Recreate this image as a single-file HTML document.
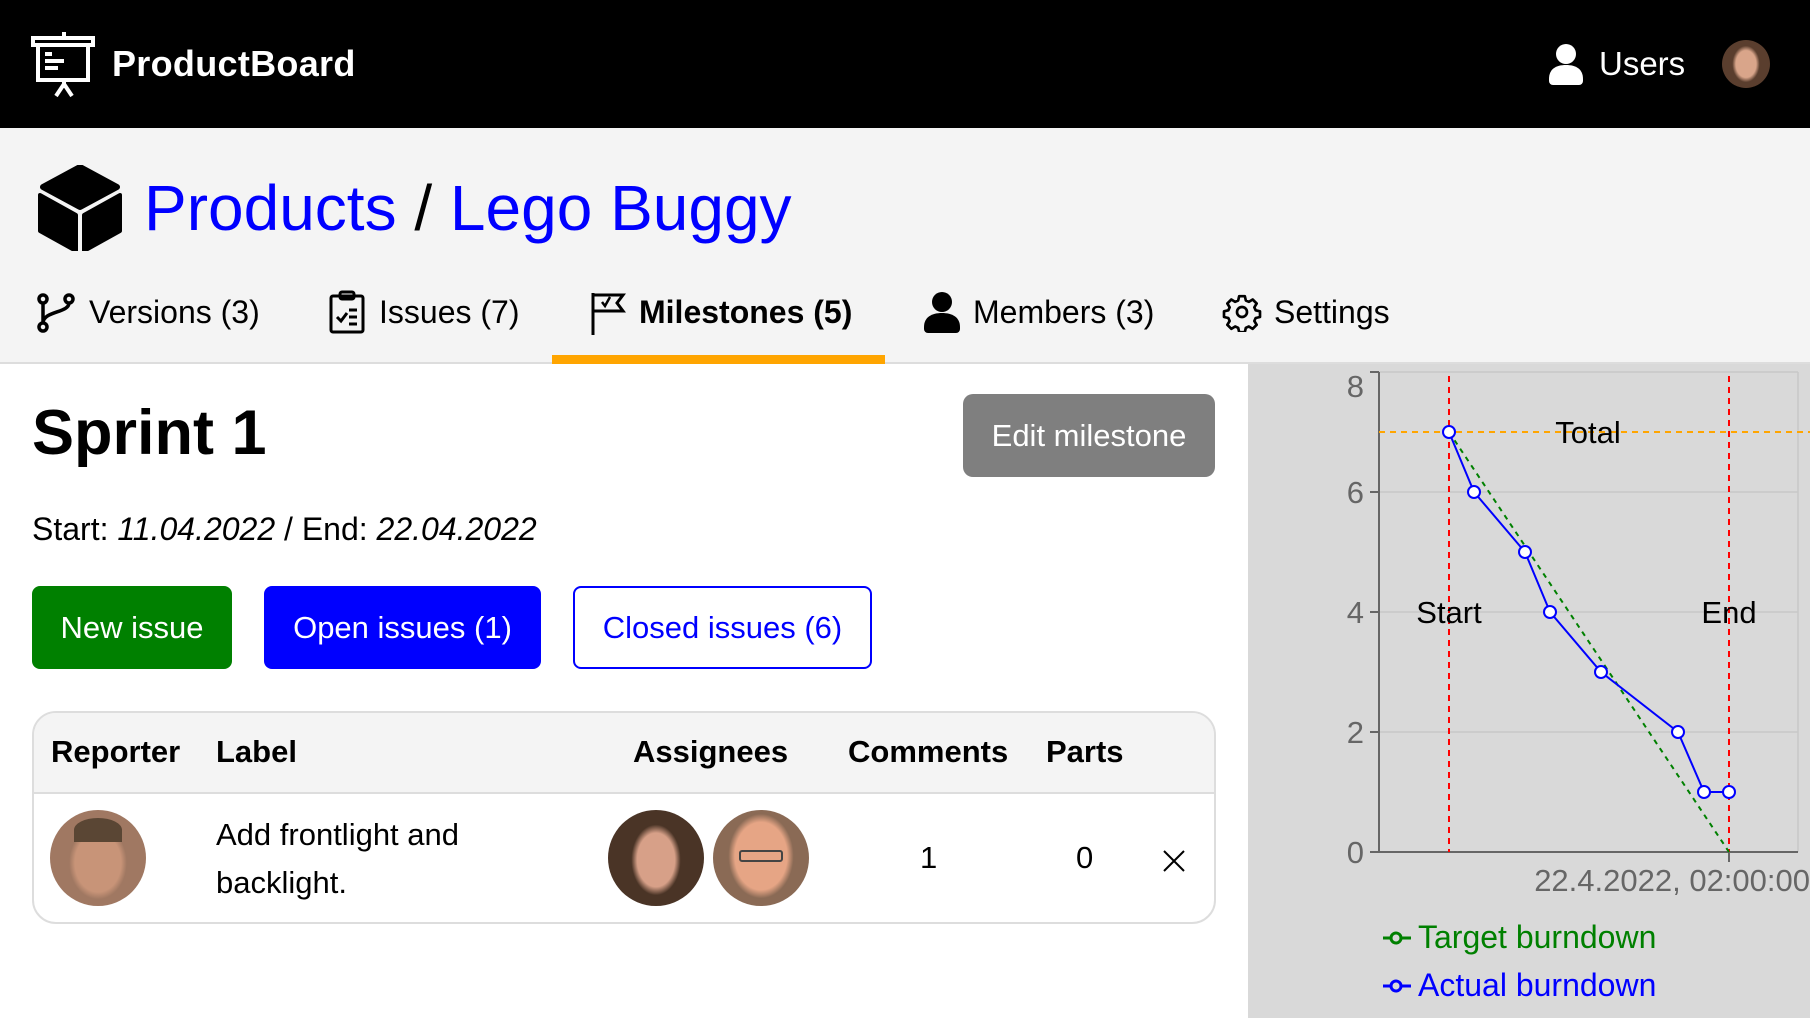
<!DOCTYPE html>
<html><head><meta charset="utf-8"><style>
*{box-sizing:border-box;margin:0;padding:0}
body{width:1810px;height:1018px;overflow:hidden;font-family:"Liberation Sans",Arial,sans-serif;background:#fff;position:relative;color:#000}
.a{position:absolute;white-space:nowrap}
.hdr{position:absolute;left:0;top:0;width:1810px;height:128px;background:#000}
.sub{position:absolute;left:0;top:128px;width:1810px;height:236px;background:#f4f4f4;border-bottom:2px solid #ddd}
.tab{position:absolute;top:292px;font-size:32px;line-height:40px}
.btn{position:absolute;top:586px;height:83px;border-radius:8px;font-size:31px;line-height:83px;text-align:center}
.th{position:absolute;top:732px;font-size:31px;font-weight:bold;line-height:40px}
.av{position:absolute;border-radius:50%;overflow:hidden}
</style></head><body>
<div class="hdr"></div>
<svg class="a" style="left:30px;top:30px" width="68" height="68" viewBox="0 0 68 68" fill="none" stroke="#fff" stroke-width="4">
<line x1="34" y1="2" x2="34" y2="8"/><rect x="3" y="8" width="60" height="7"/><rect x="8" y="15" width="50" height="35"/>
<line x1="15" y1="24" x2="22" y2="24"/><line x1="15" y1="31" x2="34" y2="31"/><line x1="15" y1="38" x2="28" y2="38"/>
<line x1="34" y1="50" x2="34" y2="58"/><line x1="34" y1="54" x2="26" y2="66"/><line x1="34" y1="54" x2="42" y2="66"/></svg>
<div class="a" style="left:112px;top:44px;color:#fff;font-weight:bold;font-size:36px;line-height:40px;letter-spacing:0.3px">ProductBoard</div>
<svg class="a" style="left:1547px;top:43px" width="38" height="42" viewBox="0 0 38 42" fill="#fff"><circle cx="19" cy="11" r="10"/><path d="M2 36c0-10 7-14 17-14s17 4 17 14v2a4 4 0 0 1-4 4H6a4 4 0 0 1-4-4z"/></svg>
<div class="a" style="left:1599px;top:44px;color:#fff;font-size:33px;line-height:40px">Users</div>
<div class="av" style="left:1722px;top:40px;width:48px;height:48px;background:radial-gradient(ellipse 30% 40% at 50% 50%,#d9a58a 0 70%,#5a3e2e 95%),#a8b0b0"></div>
<div class="sub"></div>
<svg class="a" style="left:37px;top:165px" width="86" height="86" viewBox="0 0 86 86" fill="#000">
<path d="M43 2 L80 22 L43 42 L6 22Z" stroke="#000" stroke-width="6" stroke-linejoin="round"/>
<path d="M3 30 L39 50 L39 86 L3 66Z" stroke="#000" stroke-width="4" stroke-linejoin="round"/><path d="M83 30 L47 50 L47 86 L83 66Z" stroke="#000" stroke-width="4" stroke-linejoin="round"/></svg>
<div class="a" style="left:144px;top:171px;font-size:64px;line-height:75px"><span style="color:#0000ff">Products</span> / <span style="color:#0000ff">Lego Buggy</span></div>
<svg class="a" style="left:37px;top:293px" width="40" height="40" viewBox="0 0 40 40" fill="none" stroke="#000" stroke-width="3.5"><circle cx="6" cy="6" r="4"/><circle cx="6" cy="34" r="4"/><circle cx="32" cy="6" r="4"/><path d="M6 10v20M32 10c0 10-26 8-26 20"/></svg>
<div class="tab" style="left:89px">Versions (3)</div>
<svg class="a" style="left:329px;top:290px" width="36" height="44" viewBox="0 0 36 44" fill="none" stroke="#000" stroke-width="3"><rect x="2" y="6" width="32" height="36" rx="2"/><rect x="11" y="2" width="14" height="7" rx="2"/><path d="M8 27l4 4 6-8M20 20h8M20 27h8M20 34h8"/></svg>
<div class="tab" style="left:379px">Issues (7)</div>
<svg class="a" style="left:590px;top:291px" width="36" height="44" viewBox="0 0 36 44" fill="none" stroke="#000" stroke-width="3"><path d="M3 2v42M3 4h30l-6 8 6 8H3"/><path d="M12 11l3 4 5-9" stroke-width="2.5"/></svg>
<div class="tab" style="left:639px;font-weight:bold">Milestones (5)</div>
<div class="a" style="left:552px;top:355px;width:333px;height:9px;background:#ffa500"></div>
<svg class="a" style="left:922px;top:291px" width="40" height="42" viewBox="0 0 40 42" fill="#000"><circle cx="20" cy="11" r="10"/><path d="M2 36c0-10 8-14 18-14s18 4 18 14v2a4 4 0 0 1-4 4H6a4 4 0 0 1-4-4z"/></svg>
<div class="tab" style="left:973px">Members (3)</div>
<svg class="a" style="left:1222px;top:292px" width="40" height="40" viewBox="0 0 24 24" fill="none" stroke="#000" stroke-width="1.6"><circle cx="12" cy="12" r="3"/><path d="M10.3 2.5h3.4l.6 2.6 1.8.8 2.3-1.4 2.4 2.4-1.4 2.3.8 1.8 2.6.6v3.4l-2.6.6-.8 1.8 1.4 2.3-2.4 2.4-2.3-1.4-1.8.8-.6 2.6h-3.4l-.6-2.6-1.8-.8-2.3 1.4-2.4-2.4 1.4-2.3-.8-1.8-2.6-.6v-3.4l2.6-.6.8-1.8-1.4-2.3 2.4-2.4 2.3 1.4 1.8-.8z" stroke-linejoin="round"/></svg>
<div class="tab" style="left:1274px">Settings</div>

<div class="a" style="left:32px;top:398px;font-size:63px;font-weight:bold;line-height:70px">Sprint 1</div>
<div class="a" style="left:963px;top:394px;width:252px;height:83px;background:#7f7f7f;border-radius:10px;color:#fff;font-size:31px;line-height:83px;text-align:center">Edit milestone</div>
<div class="a" style="left:32px;top:511px;font-size:32px;line-height:36px">Start: <i>11.04.2022</i> / End: <i>22.04.2022</i></div>
<div class="btn" style="left:32px;width:200px;background:#008000;color:#fff">New issue</div>
<div class="btn" style="left:264px;width:277px;background:#0000ff;color:#fff">Open issues (1)</div>
<div class="btn" style="left:573px;width:299px;background:#fff;color:#0000ff;border:2px solid #0000ff;line-height:79px">Closed issues (6)</div>

<div class="a" style="left:32px;top:711px;width:1184px;height:213px;border:2px solid #ddd;border-radius:24px;overflow:hidden;background:#fff">
<div style="height:81px;background:#f4f4f4;border-bottom:2px solid #ddd"></div></div>
<div class="th" style="left:51px">Reporter</div>
<div class="th" style="left:216px">Label</div>
<div class="th" style="left:633px">Assignees</div>
<div class="th" style="left:848px">Comments</div>
<div class="th" style="left:1046px">Parts</div>
<div class="av" style="left:50px;top:810px;width:96px;height:96px;background:radial-gradient(ellipse 30% 38% at 50% 55%,#c89478 0 80%,#a07862 100%),#e8e8e8"><div style="position:absolute;left:24px;top:8px;width:48px;height:24px;border-radius:50% 50% 0 0;background:#5a4634"></div></div>
<div class="a" style="left:216px;top:811px;font-size:31px;line-height:48px">Add frontlight and<br>backlight.</div>
<div class="av" style="left:608px;top:810px;width:96px;height:96px;background:radial-gradient(ellipse 28% 40% at 50% 52%,#d7a088 0 70%,#4a3426 92%),#b8bfbf"></div>
<div class="av" style="left:713px;top:810px;width:96px;height:96px;background:radial-gradient(ellipse 34% 44% at 50% 48%,#e6a585 0 80%,#8a6a55 100%),#9a9284"><div style="position:absolute;left:26px;top:40px;width:44px;height:12px;border:2px solid #444;border-radius:3px"></div></div>
<div class="a" style="left:920px;top:838px;font-size:31px;line-height:40px">1</div>
<div class="a" style="left:1076px;top:838px;font-size:31px;line-height:40px">0</div>
<svg class="a" style="left:1162px;top:849px" width="24" height="24" viewBox="0 0 24 24" stroke="#000" stroke-width="2"><path d="M2 2L22 22M22 2L2 22"/></svg>

<svg class="a" style="left:1248px;top:364px" width="562" height="654" viewBox="1248 364 562 654">
<rect x="1248" y="364" width="562" height="654" fill="#d9d9d9"/>
<g stroke="#c8c8c8" stroke-width="1.5"><line x1="1379" y1="372" x2="1798" y2="372"/><line x1="1379" y1="492" x2="1798" y2="492"/><line x1="1379" y1="612" x2="1798" y2="612"/><line x1="1379" y1="732" x2="1798" y2="732"/><line x1="1798" y1="372" x2="1798" y2="852"/></g>
<g stroke="#666" stroke-width="2"><line x1="1379" y1="372" x2="1379" y2="852"/><line x1="1379" y1="852" x2="1798" y2="852"/><line x1="1370" y1="372" x2="1379" y2="372"/><line x1="1370" y1="492" x2="1379" y2="492"/><line x1="1370" y1="612" x2="1379" y2="612"/><line x1="1370" y1="732" x2="1379" y2="732"/><line x1="1370" y1="852" x2="1379" y2="852"/><line x1="1729" y1="852" x2="1729" y2="862"/></g>
<g fill="#666" font-size="31" text-anchor="end" font-family="Liberation Sans"><text x="1364" y="397">8</text><text x="1364" y="503">6</text><text x="1364" y="623">4</text><text x="1364" y="743">2</text><text x="1364" y="863">0</text><text x="1810" y="891">22.4.2022, 02:00:00</text></g>
<line x1="1379" y1="432" x2="1810" y2="432" stroke="#ffa500" stroke-width="2" stroke-dasharray="6 5"/>
<line x1="1449" y1="376" x2="1449" y2="852" stroke="#f00" stroke-width="2" stroke-dasharray="6 5"/>
<line x1="1729" y1="376" x2="1729" y2="852" stroke="#f00" stroke-width="2" stroke-dasharray="6 5"/>
<line x1="1449" y1="432" x2="1729" y2="852" stroke="#008000" stroke-width="2" stroke-dasharray="5 5"/>
<g font-size="31" font-family="Liberation Sans" text-anchor="middle" fill="#000"><text x="1588" y="443">Total</text><text x="1449" y="623">Start</text><text x="1729" y="623">End</text></g>
<polyline points="1449,432 1474,492 1525,552 1550,612 1601,672 1678,732 1704,792 1729,792" fill="none" stroke="#0000ff" stroke-width="2"/>
<g fill="#fff" stroke="#0000ff" stroke-width="2"><circle cx="1449" cy="432" r="6"/><circle cx="1474" cy="492" r="6"/><circle cx="1525" cy="552" r="6"/><circle cx="1550" cy="612" r="6"/><circle cx="1601" cy="672" r="6"/><circle cx="1678" cy="732" r="6"/><circle cx="1704" cy="792" r="6"/><circle cx="1729" cy="792" r="6"/></g>
<g stroke-width="3" fill="#d9d9d9"><line x1="1383" y1="938" x2="1411" y2="938" stroke="#008000"/><circle cx="1396" cy="938" r="5" stroke="#008000"/><line x1="1383" y1="986" x2="1411" y2="986" stroke="#0000ff"/><circle cx="1396" cy="986" r="5" stroke="#0000ff"/></g>
<g font-size="32" font-family="Liberation Sans"><text x="1418" y="948" fill="#008000">Target burndown</text><text x="1418" y="996" fill="#0000ff">Actual burndown</text></g>
</svg>
</body></html>
